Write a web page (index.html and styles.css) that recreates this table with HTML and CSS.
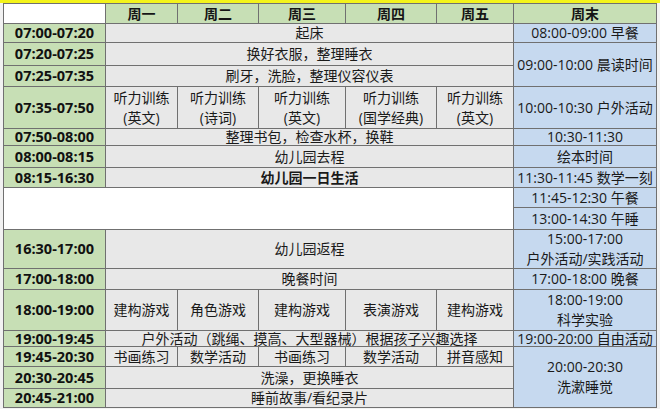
FILE: index.html
```html
<!DOCTYPE html>
<html lang="zh">
<head>
<meta charset="utf-8">
<title>作息时间表</title>
<link rel="stylesheet" href="styles.css">
</head>
<body>
<div class="topbar"></div>
<div class="wrap">
  <div class="grid">
    <div class="cell corner"></div>
    <div class="cell head">周一</div>
    <div class="cell head">周二</div>
    <div class="cell head">周三</div>
    <div class="cell head">周四</div>
    <div class="cell head">周五</div>
    <div class="cell head">周末</div>

    <div class="cell time">07:00-07:20</div>
    <div class="cell act span5">起床</div>
    <div class="cell wk">08:00-09:00 早餐</div>

    <div class="cell time">07:20-07:25</div>
    <div class="cell act span5">换好衣服，整理睡衣</div>
    <div class="cell wk tall2">09:00-10:00 晨读时间</div>

    <div class="cell time">07:25-07:35</div>
    <div class="cell act span5">刷牙，洗脸，整理仪容仪表</div>

    <div class="cell time">07:35-07:50</div>
    <div class="cell act">听力训练<br>(英文)</div>
    <div class="cell act">听力训练<br>(诗词)</div>
    <div class="cell act">听力训练<br>(英文)</div>
    <div class="cell act">听力训练<br>(国学经典)</div>
    <div class="cell act">听力训练<br>(英文)</div>
    <div class="cell wk">10:00-10:30 户外活动</div>

    <div class="cell time">07:50-08:00</div>
    <div class="cell act span5">整理书包，检查水杯，换鞋</div>
    <div class="cell wk">10:30-11:30</div>

    <div class="cell time">08:00-08:15</div>
    <div class="cell act span5">幼儿园去程</div>
    <div class="cell wk">绘本时间</div>

    <div class="cell time">08:15-16:30</div>
    <div class="cell act span5 bold">幼儿园一日生活</div>
    <div class="cell wk">11:30-11:45 数学一刻</div>

    <div class="cell blank"></div>
    <div class="cell wk">11:45-12:30 午餐</div>
    <div class="cell wk">13:00-14:30 午睡</div>

    <div class="cell time">16:30-17:00</div>
    <div class="cell act span5">幼儿园返程</div>
    <div class="cell wk">15:00-17:00<br>户外活动/实践活动</div>

    <div class="cell time">17:00-18:00</div>
    <div class="cell act span5">晚餐时间</div>
    <div class="cell wk">17:00-18:00 晚餐</div>

    <div class="cell time">18:00-19:00</div>
    <div class="cell act">建构游戏</div>
    <div class="cell act">角色游戏</div>
    <div class="cell act">建构游戏</div>
    <div class="cell act">表演游戏</div>
    <div class="cell act">建构游戏</div>
    <div class="cell wk">18:00-19:00<br>科学实验</div>

    <div class="cell time">19:00-19:45</div>
    <div class="cell act span5">户外活动（跳绳、摸高、大型器械）根据孩子兴趣选择</div>
    <div class="cell wk">19:00-20:00 自由活动</div>

    <div class="cell time">19:45-20:30</div>
    <div class="cell act">书画练习</div>
    <div class="cell act">数学活动</div>
    <div class="cell act">书画练习</div>
    <div class="cell act">数学活动</div>
    <div class="cell act">拼音感知</div>
    <div class="cell wk tall3">20:00-20:30<br>洗漱睡觉</div>

    <div class="cell time">20:30-20:45</div>
    <div class="cell act span5">洗澡，更换睡衣</div>

    <div class="cell time">20:45-21:00</div>
    <div class="cell act span5">睡前故事/看纪录片</div>
  </div>
</div>
</body>
</html>
```

FILE: styles.css
```css
* {
  box-sizing: border-box;
}

html, body {
  margin: 0;
  padding: 0;
}

body {
  width: 660px;
  height: 409px;
  overflow: hidden;
  background: #f2f2f2;
  font-family: "Open Sans", "Noto Sans CJK SC", sans-serif;
  font-size: 14px;
  color: #1a1a1a;
}

.topbar {
  height: 3px;
  background: #f4f41a;
}

.wrap {
  padding-left: 3px;
}

.grid {
  display: grid;
  width: max-content;
  grid-template-columns: 101px 71px 80px 86px 90px 76px 142px;
  grid-template-rows: 19px 18px 22px 20px 41px 16px 21px 19px 19px 21px 38px 20px 40px 15px 19px 21px 18px;
  gap: 1px;
  background: #707070;
  border: 1px solid #707070;
}

.cell {
  display: flex;
  align-items: center;
  justify-content: center;
  text-align: center;
  line-height: 20px;
  white-space: nowrap;
}

.corner {
  background: #ffffff;
}

.head {
  background: #c7dfb5;
  font-weight: 700;
  color: #151515;
}

.time {
  background: #c7dfb5;
  font-weight: 700;
  font-size: 14.5px;
  color: #111;
}

.act {
  background: #e8e8e8;
}

.wk {
  background: #c6d9ef;
}

.blank {
  background: #ffffff;
  grid-column: span 6;
  grid-row: span 2;
}

.span5 {
  grid-column: span 5;
}

.tall2 {
  grid-row: span 2;
}

.tall3 {
  grid-row: span 3;
}

.bold {
  font-weight: 700;
}
```
